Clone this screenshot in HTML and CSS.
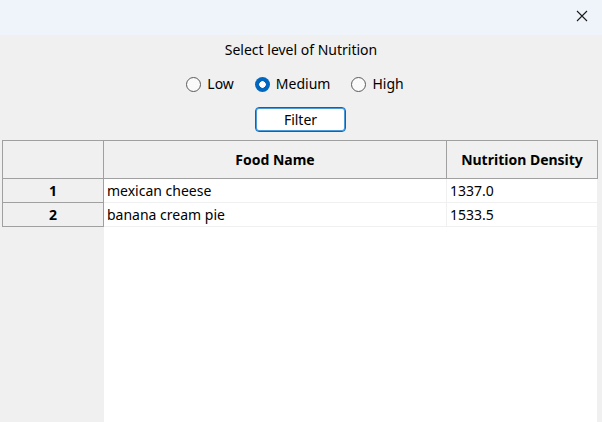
FILE: index.html
```html
<!DOCTYPE html>
<html>
<head>
<meta charset="utf-8">
<link rel="stylesheet" href="styles.css">
</head>
<body>
<div class="window">
  <div class="titlebar">
    <svg class="close" width="12" height="12" viewBox="0 0 12 12"><path d="M1 1 L11 11 M11 1 L1 11" stroke="#1a1a1a" stroke-width="1.1" fill="none"/></svg>
  </div>
  <div class="content">
    <div class="label">Select level of Nutrition</div>
    <div class="radios">
      <label class="radio"><span class="circle"></span><span>Low</span></label>
      <label class="radio"><span class="circle checked"></span><span>Medium</span></label>
      <label class="radio"><span class="circle"></span><span>High</span></label>
    </div>
    <button class="btn">Filter</button>
    <div class="table">
      <div class="row header">
        <div class="rh corner"></div>
        <div class="hc c-name">Food Name</div>
        <div class="hc c-dens">Nutrition Density</div>
      </div>
      <div class="row">
        <div class="rh">1</div>
        <div class="dc c-name">mexican cheese</div>
        <div class="dc c-dens">1337.0</div>
      </div>
      <div class="row">
        <div class="rh">2</div>
        <div class="dc c-name">banana cream pie</div>
        <div class="dc c-dens">1533.5</div>
      </div>
      <div class="row filler">
        <div class="rh-fill"></div>
        <div class="white-fill"></div>
      </div>
    </div>
  </div>
</div>
</body>
</html>
```
FILE: styles.css
```css
* { box-sizing: border-box; }
html, body { margin: 0; padding: 0; }
body {
  width: 602px;
  height: 422px;
  overflow: hidden;
  background: #f0f0f0;
  font-family: "Noto Sans", "Open Sans", sans-serif;
  font-size: 14px;
  color: #000;
}
.window {
  display: flex;
  flex-direction: column;
  height: 422px;
}
.titlebar {
  height: 35px;
  background: #eef4f9;
  display: flex;
  justify-content: flex-end;
  align-items: center;
  padding-right: 14px;
}
.close { display: block; margin-top: -3px; }
.content {
  flex: 1;
  display: flex;
  flex-direction: column;
  align-items: center;
  min-height: 0;
}
.label {
  margin-top: 5px;
  line-height: 20px;
  height: 20px;
}
.radios {
  margin-top: 14px;
  display: flex;
  gap: 21px;
  height: 20px;
  line-height: 20px;
  padding-right: 12px;
}
.radio {
  display: flex;
  align-items: center;
  gap: 6px;
}
.circle {
  width: 15px;
  height: 15px;
  border-radius: 50%;
  border: 1px solid #5a5a5a;
  background: #fafafa;
  display: block;
}
.circle.checked {
  border: none;
  background: radial-gradient(circle, #fff 0 3px, #0067c0 3.5px);
}
.btn {
  margin-top: 13px;
  margin-right: 1px;
  width: 91px;
  height: 25px;
  background: #fff;
  border: 1px solid #0067c0;
  border-radius: 4px;
  font-family: inherit;
  font-size: 14px;
  color: #000;
  padding: 0;
  line-height: 22px;
  box-shadow: inset 0 0 0 1px #4c9ad9;
}
.table {
  margin-top: 8px;
  align-self: flex-start;
  margin-left: 2px;
  width: 596px;
  flex: 1;
  display: flex;
  flex-direction: column;
}
.row { display: flex; }
.header { height: 39px; }
.header .rh, .hc {
  border-top: 1px solid #a0a0a0;
  border-bottom: 1px solid #a0a0a0;
  background: #f0f0f0;
}
.rh {
  width: 102px;
  border-left: 1px solid #a0a0a0;
  border-right: 1px solid #a0a0a0;
  border-bottom: 1px solid #a0a0a0;
  background: #f0f0f0;
  font-weight: 700;
  text-align: center;
  height: 24px;
  line-height: 23px;
}
.header .rh { height: 39px; }
.hc {
  font-weight: 700;
  display: flex;
  align-items: center;
  justify-content: center;
  border-right: 1px solid #a0a0a0;
}
.c-name { width: 343px; }
.c-dens { width: 151px; }
.dc {
  background: #fff;
  height: 24px;
  line-height: 23px;
  border-right: 1px solid #f0f0f0;
  border-bottom: 1px solid #f0f0f0;
  padding-left: 3px;
}
.filler { flex: 1; }
.rh-fill { width: 102px; background: #f0f0f0; }
.white-fill { width: 493px; background: #fff; }
```
